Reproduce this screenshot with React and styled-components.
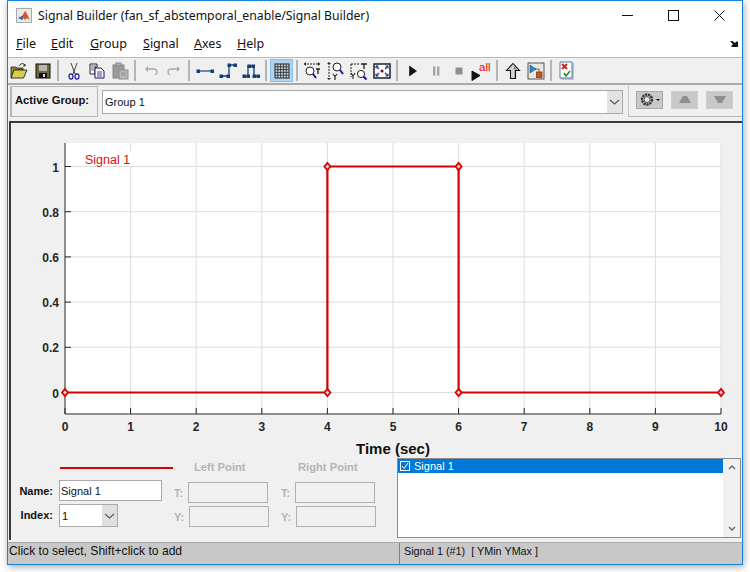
import React from 'react';
import styled, { createGlobalStyle } from 'styled-components';

const GlobalStyle = createGlobalStyle`
  html, body {
    margin: 0;
    padding: 0;
    background: #ffffff;
    overflow: hidden;
  }
`;

const Page = styled.div`
  width: 750px;
  height: 572px;
  padding-left: 7px;
  box-sizing: border-box;
`;

const Window = styled.div`
  width: 736px;
  height: 565px;
  box-sizing: border-box;
  border: 1px solid #1a84d8;
  background: #f0f0f0;
  box-shadow: 1px 2px 7px rgba(0, 0, 0, 0.35);
  display: flex;
  flex-direction: column;
  font-family: 'Liberation Sans', Arial, sans-serif;
`;

const TitleBar = styled.div`
  height: 29px;
  flex: none;
  background: #ffffff;
  display: flex;
  align-items: center;
  padding-left: 8px;
`;

const TitleText = styled.div`
  font-family: 'Noto Sans', sans-serif;
  font-size: 12.25px;
  color: #111;
  margin-left: 6px;
  flex: 1;
  white-space: nowrap;
`;

const Caption = styled.div`
  width: 46px;
  height: 29px;
  display: flex;
  align-items: center;
  justify-content: center;
`;

const MenuBar = styled.div`
  height: 27px;
  flex: none;
  background: #ffffff;
  border-bottom: 1px solid #b9b9b9;
  display: flex;
  align-items: center;
  padding: 0 3px 0 8px;
`;

const MenuItem = styled.div`
  font-family: 'Noto Sans', sans-serif;
  font-size: 12.5px;
  color: #111;
  width: ${(p) => p.$w}px;
  span {
    text-decoration: underline;
  }
`;

const Toolbar = styled.div`
  height: 25px;
  flex: none;
  border-bottom: 2px solid #aaaaaa;
  display: flex;
  align-items: center;
  background: #efefef;
`;

const ToolButton = styled.div`
  width: 23px;
  height: 23px;
  display: flex;
  align-items: center;
  justify-content: center;
  box-sizing: border-box;
  ${(p) => p.$active && 'background: #add3f0; border: 1px solid #8cc0e8;'}
`;

const ToolSep = styled.div`
  width: 2px;
  height: 21px;
  margin: 0 3px;
  background: #b4b4b4;
`;

const GroupBar = styled.div`
  height: 35px;
  flex: none;
  display: flex;
  align-items: stretch;
  padding: 1px 0 0 2px;
`;

const GroupLabel = styled.div`
  width: 88px;
  height: 31px;
  box-sizing: border-box;
  border: 1px solid #b5b5b5;
  border-left-width: 2px;
  font-size: 11.2px;
  font-weight: bold;
  color: #111;
  display: flex;
  align-items: center;
  padding-left: 3px;
  padding-bottom: 3px;
`;

const Combo = styled.div`
  width: 521px;
  height: 24px;
  margin: 4px 0 0 4px;
  box-sizing: border-box;
  border: 1px solid #aaaaaa;
  background: #ffffff;
  display: flex;
  align-items: center;
  justify-content: space-between;
  font-size: 11px;
  color: #111;
  padding-left: 2px;
`;

const ComboArrow = styled.div`
  width: 15px;
  height: 100%;
  background: #e3e3e3;
  display: flex;
  align-items: center;
  justify-content: center;
`;

const GroupTools = styled.div`
  margin-left: 5px;
  height: 31px;
  flex: 1;
  box-sizing: border-box;
  border-left: 1px solid #c4c4c4;
  border-bottom: 1px solid #b5b5b5;
  display: flex;
  align-items: center;
  padding: 0 0 3px 7px;
  gap: 8px;
`;

const GroupButton = styled.div`
  width: 27px;
  height: 18px;
  box-sizing: border-box;
  border: 1px solid ${(p) => (p.$on ? '#a9a9a9' : '#cfcfcf')};
  background: #c8c8c8;
  display: flex;
  align-items: center;
  justify-content: center;
`;

const Workspace = styled.div`
  margin-left: 1px;
  flex: 1;
  min-height: 0;
  border-top: 2px solid #3a3a3a;
  border-left: 2px solid #3a3a3a;
  display: flex;
  flex-direction: column;
`;

const Chart = styled.svg`
  display: block;
  flex: none;
`;

const ControlRow = styled.div`
  display: flex;
  height: 80px;
  flex: none;
`;

const EditPane = styled.div`
  width: 387px;
  flex: none;
  display: grid;
  grid-template-columns: 48px 115px 106px 107px;
  grid-template-rows: 21px 24px 24px;
  align-content: start;
`;

const StrokeCell = styled.div`
  grid-column: 1 / span 2;
  display: flex;
  align-items: flex-start;
  padding: 9px 0 0 49px;
  box-sizing: border-box;
`;

const SignalStroke = styled.div`
  width: 113px;
  height: 2px;
  background: #d60000;
`;

const PointTitle = styled.div`
  font-size: 11.2px;
  font-weight: bold;
  color: #b4b4b4;
  padding-left: ${(p) => p.$pad}px;
  padding-top: 3px;
  white-space: nowrap;
`;

const FieldLabel = styled.div`
  font-size: 11px;
  font-weight: bold;
  color: #111;
  padding-right: 6px;
  display: flex;
  align-items: center;
  justify-content: flex-end;
`;

const NameInput = styled.div`
  width: 103px;
  height: 21px;
  box-sizing: border-box;
  border: 1px solid #aaaaaa;
  background: #ffffff;
  font-size: 11px;
  color: #111;
  display: flex;
  align-items: center;
  padding-left: 1px;
  margin-top: 1px;
`;

const IndexSelect = styled.div`
  width: 59px;
  height: 23px;
  box-sizing: border-box;
  border: 1px solid #aaaaaa;
  background: #ffffff;
  font-size: 11px;
  color: #111;
  display: flex;
  align-items: center;
  justify-content: space-between;
  padding-left: 2px;
  margin-top: 1px;
`;

const IndexArrow = styled.div`
  width: 15px;
  height: 100%;
  background: #e0e0e0;
  display: flex;
  align-items: center;
  justify-content: center;
`;

const PointField = styled.div`
  display: flex;
  align-items: center;
  font-size: 11px;
  font-weight: bold;
  color: #b4b4b4;
  padding: 3px 0 0 ${(p) => p.$pad}px;
`;

const PointBox = styled.div`
  width: 80px;
  height: 21px;
  box-sizing: border-box;
  border: 1px solid #b0b0b0;
  margin-left: 5px;
`;

const ListPane = styled.div`
  width: 344px;
  height: 80px;
  box-sizing: border-box;
  border: 1px solid #8a8a8a;
  background: #ffffff;
  margin-left: -1px;
  display: flex;
`;

const ListBody = styled.div`
  flex: 1;
`;

const ListRow = styled.div`
  height: 14px;
  background: #0078d7;
  color: #ffffff;
  font-size: 11px;
  display: flex;
  align-items: center;
  padding-left: 2px;
  gap: 4px;
`;

const CheckMark = styled.div`
  width: 10px;
  height: 10px;
  box-sizing: border-box;
  border: 1px solid #ffffff;
  display: flex;
  align-items: center;
  justify-content: center;
`;

const ScrollTrack = styled.div`
  width: 17px;
  background: #f0f0f0;
  display: flex;
  flex-direction: column;
  justify-content: space-between;
  align-items: center;
  padding: 6px 0;
  box-sizing: border-box;
`;

const StatusBar = styled.div`
  height: 22px;
  flex: none;
  margin-top: 2px;
  background: #c8c8c8;
  display: flex;
  font-size: 12.1px;
  color: #111;
  border-top: 1px solid #aaaaaa;
  box-sizing: border-box;
`;

const StatusLeft = styled.div`
  width: 390px;
  padding-left: 1px;
  display: flex;
  align-items: center;
  padding-bottom: 6px;
`;

const StatusRight = styled.div`
  flex: 1;
  border-left: 1px solid #808080;
  padding-left: 4px;
  font-size: 10.8px;
  display: flex;
  align-items: center;
  padding-bottom: 6px;
  white-space: pre;
`;

const Glyph = ({ children, w = 20, h = 20 }) => (
  <svg width={w} height={h} viewBox={`0 0 ${w} ${h}`}>
    {children}
  </svg>
);

const blue = '#123f7a';
const Node = ({ x, y }) => <rect x={x - 1.5} y={y - 1.5} width="3.5" height="3.5" fill={blue} />;

const icons = {
  open: (
    <Glyph>
      <g transform="translate(-1 0)">
        <path d="M2 6h5l1 1h6v2H6l-3 8H2z" fill="#8a8a20" stroke="#222" strokeWidth="0.8" />
        <path d="M5 9h13l-3.5 8H2z" fill="#d8cc50" stroke="#222" strokeWidth="0.9" />
        <path d="M10 5c1-2 3-3 5-2l1 2m0-2v2h-2" fill="none" stroke="#222" strokeWidth="0.9" />
      </g>
    </Glyph>
  ),
  save: (
    <Glyph>
      <rect x="3" y="3" width="14" height="14" fill="#6a6a3a" stroke="#111" />
      <rect x="6" y="4" width="8" height="6" fill="#b5b5b5" />
      <rect x="6" y="12" width="8" height="5" fill="#111" />
      <rect x="10" y="13" width="2" height="3" fill="#ddd" />
    </Glyph>
  ),
  cut: (
    <Glyph>
      <path d="M7 2l4 11M13 2L9 13" stroke="#333" strokeWidth="0.9" fill="none" />
      <ellipse cx="7" cy="15.5" rx="2" ry="2.6" fill="none" stroke="#1a1a9a" strokeWidth="1.2" />
      <ellipse cx="13" cy="15.5" rx="2" ry="2.6" fill="none" stroke="#1a1a9a" strokeWidth="1.2" />
    </Glyph>
  ),
  copy: (
    <Glyph>
      <path d="M3 3h7v3h-2v7H3z" fill="#fff" stroke="#222" />
      <path d="M4 5h5M4 7h3M4 9h3" stroke="#222" strokeWidth="0.7" />
      <path d="M8 7h6l3 3v7H8z" fill="#fff" stroke="#10107a" />
      <path d="M10 11h5M10 13h5M10 15h5" stroke="#10107a" strokeWidth="0.8" />
    </Glyph>
  ),
  paste: (
    <Glyph>
      <rect x="3" y="4" width="11" height="13" fill="#9a9a9a" stroke="#888" />
      <rect x="6" y="2" width="5" height="3" fill="#b0b0b0" stroke="#888" />
      <rect x="9" y="9" width="9" height="9" fill="#b8b8b8" stroke="#8c8c8c" />
      <path d="M11 12h5M11 14h5" stroke="#888" strokeWidth="0.8" />
    </Glyph>
  ),
  undo: (
    <Glyph>
      <path d="M5 8h8c2 0 3 1.5 3 3s-.8 2.5-2 3" fill="none" stroke="#a8a8a8" strokeWidth="1.3" />
      <path d="M4 8l3-3v6z" fill="#a8a8a8" />
    </Glyph>
  ),
  redo: (
    <Glyph>
      <path d="M15 8H7c-2 0-3 1.5-3 3s.8 2.5 2 3" fill="none" stroke="#a8a8a8" strokeWidth="1.3" />
      <path d="M16 8l-3-3v6z" fill="#a8a8a8" />
    </Glyph>
  ),
  line: (
    <Glyph>
      <path d="M3 10h14" stroke={blue} strokeWidth="1.2" />
      <Node x={3} y={10} />
      <Node x={17} y={10} />
    </Glyph>
  ),
  step: (
    <Glyph>
      <path d="M3 15h8V4h6" fill="none" stroke={blue} strokeWidth="1.3" />
      <Node x={3} y={15} />
      <Node x={10} y={15} />
      <Node x={11} y={4} />
      <Node x={17} y={4} />
    </Glyph>
  ),
  pulse: (
    <Glyph>
      <path d="M2 15h5V5h6v10h5" fill="none" stroke={blue} strokeWidth="1.3" />
      <Node x={3} y={15} />
      <Node x={7} y={15} />
      <Node x={8} y={5} />
      <Node x={12} y={5} />
      <Node x={13} y={15} />
      <Node x={17} y={15} />
    </Glyph>
  ),
  grid: (
    <Glyph>
      <rect x="3" y="3" width="14" height="14" fill="#c8d4dc" stroke="#222" />
      <path d="M5.8 3v14M8.6 3v14M11.4 3v14M14.2 3v14M3 5.8h14M3 8.6h14M3 11.4h14M3 14.2h14" stroke="#333" strokeWidth="0.9" />
    </Glyph>
  ),
  zoomX: (
    <Glyph>
      <g transform="translate(-1 0)">
        <path d="M2 3h16" stroke="#222" strokeDasharray="2 1" />
        <path d="M2 3l2-2v4zM18 3l-2-2v4z" fill="#222" />
        <circle cx="8" cy="10" r="4" fill="#fff" stroke="#222" />
        <path d="M11 13l3 4" stroke="#1a1a9a" strokeWidth="2" />
        <path d="M14 8h4M16 8v5" stroke="#222" strokeWidth="1.3" />
      </g>
    </Glyph>
  ),
  zoomY: (
    <Glyph>
      <path d="M3 2v16" stroke="#222" strokeDasharray="2 1" />
      <path d="M3 1l-2 2h4zM3 19l-2-2h4z" fill="#222" />
      <circle cx="11" cy="6" r="4" fill="#fff" stroke="#222" />
      <path d="M14 9l3 4" stroke="#1a1a9a" strokeWidth="2" />
      <path d="M7 13l2 2.5 2-2.5M9 15.5V19" stroke="#222" strokeWidth="1.2" fill="none" />
    </Glyph>
  ),
  zoomXY: (
    <Glyph>
      <path d="M2 3h9M2 3v13" stroke="#222" strokeDasharray="2 1" fill="none" />
      <path d="M12 3h6M15 3v5" stroke="#222" strokeWidth="1.3" />
      <circle cx="12" cy="13" r="3.6" fill="#fff" stroke="#222" />
      <path d="M14.5 15.5l3 3" stroke="#1a1a9a" strokeWidth="2" />
      <path d="M2 12l2 3 2-3M4 15v3" stroke="#222" strokeWidth="1.1" fill="none" />
    </Glyph>
  ),
  fit: (
    <Glyph>
      <rect x="2" y="3" width="16" height="14" fill="#fff" stroke="#111" strokeWidth="1.4" />
      <path d="M4 5l3 3M16 5l-3 3M4 15l3-3M16 15l-3-3" stroke="#1a2a9a" strokeWidth="1.2" />
      <path d="M4 5h2.5M4 5v2.5M16 5h-2.5M16 5v2.5M4 15h2.5M4 15v-2.5M16 15h-2.5M16 15v-2.5" stroke="#1a2a9a" />
      <circle cx="10" cy="10" r="1.6" fill="#8a1010" />
    </Glyph>
  ),
  play: (
    <Glyph>
      <path d="M6.5 5l7 5-7 5z" fill="#111" stroke="#111" strokeWidth="0.6" />
    </Glyph>
  ),
  pause: (
    <Glyph>
      <path d="M7 5.5h2.4v9H7zM11 5.5h2.4v9H11z" fill="#a4a4a4" />
    </Glyph>
  ),
  stop: (
    <Glyph>
      <rect x="6.5" y="6.5" width="7" height="7" fill="#8e8e8e" />
    </Glyph>
  ),
  runAll: (
    <Glyph w={23} h={22}>
      <path d="M2 11l8 4.5-8 5z" fill="#111" stroke="#111" />
      <text x="9" y="11" fontSize="11.5" fill="#ee0000" fontFamily="Liberation Sans">all</text>
    </Glyph>
  ),
  up: (
    <Glyph>
      <path d="M10 2.5l6.5 7h-4v8h-5v-8h-4z" fill="#d4d4d4" stroke="#111" strokeWidth="1.1" />
      <path d="M11 4.5l3 4h-2.5v8H11z" fill="#888" />
    </Glyph>
  ),
  block: (
    <Glyph w={18} h={18}>
      <rect x="1" y="1" width="16" height="16" fill="#e8e8e0" stroke="#555" />
      <path d="M3 3l6 4-6 4z" fill="#2a88c8" stroke="#1a4a88" strokeWidth="0.6" />
      <path d="M8 7h4v4" fill="none" stroke="#333" strokeWidth="0.7" />
      <rect x="9.5" y="10" width="5.5" height="5.5" fill="#d8501c" stroke="#7a2a10" strokeWidth="0.7" />
    </Glyph>
  ),
  verify: (
    <Glyph>
      <path d="M4 2h13v17H4z" fill="#b8c8dc" />
      <path d="M3 1h12v16H3z" fill="#fff" stroke="#5a78a8" />
      <path d="M5 3l5 5M10 3L5 8" stroke="#d82010" strokeWidth="2" />
      <path d="M7 12l2 3 4-5" stroke="#108a20" strokeWidth="1.6" fill="none" />
    </Glyph>
  ),
};

const toolbarItems = [
  'open', 'save', '|', 'cut', 'copy', 'paste', '|', 'undo', 'redo', '|', 'line', 'step', 'pulse', '|',
  'grid', '|', 'zoomX', 'zoomY', 'zoomXY', 'fit', '|', 'play', 'pause', 'stop', 'runAll', '|', 'up', 'block', '|', 'verify',
];

const Chevron = ({ color = '#555' }) => (
  <svg width="11" height="6" viewBox="0 0 11 6">
    <path d="M1 1l4.5 4L10 1" fill="none" stroke={color} strokeWidth="1.1" />
  </svg>
);

const AppLogo = () => (
  <svg width="16" height="15" viewBox="0 0 16 15">
    <rect x="0.5" y="0.5" width="15" height="14" fill="#e8e8e8" stroke="#a8a8a8" />
    <path d="M2 10l4-2 3-5 2 3 3 6-3-2-2 2-2-3z" fill="#d8581c" />
    <path d="M2 10l4-2 2 2-2 2z" fill="#2a78b8" />
  </svg>
);

// chart scale: 65.6px per second, 226px per unit
const px = (t) => 54 + t * 65.6;
const py = (v) => 269.5 - v * 226;
const xTicks = [0, 1, 2, 3, 4, 5, 6, 7, 8, 9, 10];
const yTicks = [0, 0.2, 0.4, 0.6, 0.8, 1];
const signal = [[0, 0], [4, 0], [4, 1], [6, 1], [6, 0], [10, 0]];

const SignalChart = () => {
  const line = signal.map(([t, v]) => `${px(t)},${py(v)}`).join(' ');
  const top = 20;
  const bottom = 291;
  return (
    <Chart width="732" height="335" viewBox="0 0 732 335" fontFamily="Liberation Sans">
      <rect x={px(0)} y={top} width={656} height={bottom - top} fill="#ffffff" />
      {xTicks.slice(1).map((t) => (
        <line key={t} x1={px(t)} x2={px(t)} y1={top} y2={bottom} stroke="#dcdcdc" />
      ))}
      {yTicks.map((v) => (
        <line key={v} x1={px(0)} x2={px(10)} y1={py(v)} y2={py(v)} stroke="#dcdcdc" />
      ))}
      <rect x={73} y={28} width={48} height={15} fill="#ffffff" />
      <text x={74} y={41} fontSize="12.5" fill="#e01010">Signal 1</text>
      <path d={`M${px(0)} ${top}V${bottom}H${px(10)}`} fill="none" stroke="#262626" />
      {xTicks.map((t) => (
        <g key={t}>
          <line x1={px(t)} x2={px(t)} y1={bottom} y2={bottom - 6} stroke="#262626" />
          <text x={px(t)} y={bottom + 17} textAnchor="middle" fontSize="12" fontWeight="bold" fill="#262626">{t}</text>
        </g>
      ))}
      {yTicks.map((v) => (
        <g key={v}>
          <line x1={px(0)} x2={px(0) + 6} y1={py(v)} y2={py(v)} stroke="#262626" />
          <text x={px(0) - 6} y={py(v) + 5} textAnchor="end" fontSize="12" fontWeight="bold" fill="#262626">{v}</text>
        </g>
      ))}
      <polyline points={line} fill="none" stroke="#d60000" strokeWidth="2.2" />
      {signal.map(([t, v]) => (
        <path
          key={`${t}-${v}`}
          d={`M${px(t) - 3} ${py(v)}L${px(t)} ${py(v) - 3.5}L${px(t) + 3} ${py(v)}L${px(t)} ${py(v) + 3.5}Z`}
          fill="#ffc8c8"
          stroke="#d60000"
          strokeWidth="1.8"
        />
      ))}
      <text x={382} y={331} textAnchor="middle" fontSize="15" fontWeight="bold" fill="#111">Time (sec)</text>
    </Chart>
  );
};

export default function App() {
  return (
    <Page>
      <GlobalStyle />
      <Window>
        <TitleBar>
          <AppLogo />
          <TitleText>Signal Builder (fan_sf_abstemporal_enable/Signal Builder)</TitleText>
          <Caption>
            <svg width="11" height="11" viewBox="0 0 11 11"><path d="M0 5.5h11" stroke="#111" /></svg>
          </Caption>
          <Caption>
            <svg width="11" height="11" viewBox="0 0 11 11"><rect x="0.5" y="0.5" width="10" height="10" fill="none" stroke="#111" /></svg>
          </Caption>
          <Caption>
            <svg width="11" height="11" viewBox="0 0 11 11"><path d="M0.5 0.5l10 10M10.5 0.5l-10 10" stroke="#111" /></svg>
          </Caption>
        </TitleBar>
        <MenuBar>
          <MenuItem $w={35}><span>F</span>ile</MenuItem>
          <MenuItem $w={39}><span>E</span>dit</MenuItem>
          <MenuItem $w={53}><span>G</span>roup</MenuItem>
          <MenuItem $w={51}><span>S</span>ignal</MenuItem>
          <MenuItem $w={43}><span>A</span>xes</MenuItem>
          <MenuItem $w={493}><span>H</span>elp</MenuItem>
          <svg width="8" height="6" viewBox="0 0 8 6">
            <path d="M0 0h2.5l2.5 2 1.5-1.5H8V6H1.5V4.5L3 3.2z" fill="#111" />
          </svg>
        </MenuBar>
        <Toolbar>
          {toolbarItems.map((name, i) =>
            name === '|' ? (
              <ToolSep key={i} />
            ) : (
              <ToolButton key={i} $active={name === 'grid'}>
                {icons[name]}
              </ToolButton>
            ),
          )}
        </Toolbar>
        <GroupBar>
          <GroupLabel>Active Group:</GroupLabel>
          <Combo>
            Group 1
            <ComboArrow>
              <Chevron />
            </ComboArrow>
          </Combo>
          <GroupTools>
            <GroupButton $on>
              <svg width="22" height="15" viewBox="0 0 22 15">
                <circle cx="8" cy="7.5" r="5" fill="none" stroke="#333" strokeWidth="2.4" strokeDasharray="2.2 0.8" />
                <circle cx="8" cy="7.5" r="3" fill="#e8e8e8" stroke="#555" />
                <path d="M17 7h4l-2 2z" fill="#111" />
              </svg>
            </GroupButton>
            <GroupButton>
              <svg width="12" height="7" viewBox="0 0 12 7"><path d="M0 7l4-7h4l4 7z" fill="#8e8e8e" /></svg>
            </GroupButton>
            <GroupButton>
              <svg width="12" height="7" viewBox="0 0 12 7"><path d="M0 0h12L8 7H4z" fill="#8e8e8e" /></svg>
            </GroupButton>
          </GroupTools>
        </GroupBar>
        <Workspace>
          <SignalChart />
          <ControlRow>
            <EditPane>
              <StrokeCell>
                <SignalStroke />
              </StrokeCell>
              <PointTitle $pad={20}>Left Point</PointTitle>
              <PointTitle $pad={18}>Right Point</PointTitle>
              <FieldLabel>Name:</FieldLabel>
              <NameInput>Signal 1</NameInput>
              <PointField $pad={0}>T:<PointBox /></PointField>
              <PointField $pad={1}>T:<PointBox /></PointField>
              <FieldLabel>Index:</FieldLabel>
              <IndexSelect>
                1
                <IndexArrow>
                  <Chevron />
                </IndexArrow>
              </IndexSelect>
              <PointField $pad={0}>Y:<PointBox /></PointField>
              <PointField $pad={1}>Y:<PointBox /></PointField>
            </EditPane>
            <ListPane>
              <ListBody>
                <ListRow>
                  <CheckMark>
                    <svg width="8" height="8" viewBox="0 0 8 8">
                      <path d="M1 4l2 2.5L7 1" fill="none" stroke="#fff" />
                    </svg>
                  </CheckMark>
                  Signal 1
                </ListRow>
              </ListBody>
              <ScrollTrack>
                <svg width="8" height="5" viewBox="0 0 8 5"><path d="M1 4l3-3 3 3" fill="none" stroke="#666" strokeWidth="1.4" /></svg>
                <svg width="8" height="5" viewBox="0 0 8 5"><path d="M1 1l3 3 3-3" fill="none" stroke="#666" strokeWidth="1.4" /></svg>
              </ScrollTrack>
            </ListPane>
          </ControlRow>
        </Workspace>
        <StatusBar>
          <StatusLeft>Click to select, Shift+click to add</StatusLeft>
          <StatusRight>Signal 1 (#1)  [ YMin YMax ]</StatusRight>
        </StatusBar>
      </Window>
    </Page>
  );
}
